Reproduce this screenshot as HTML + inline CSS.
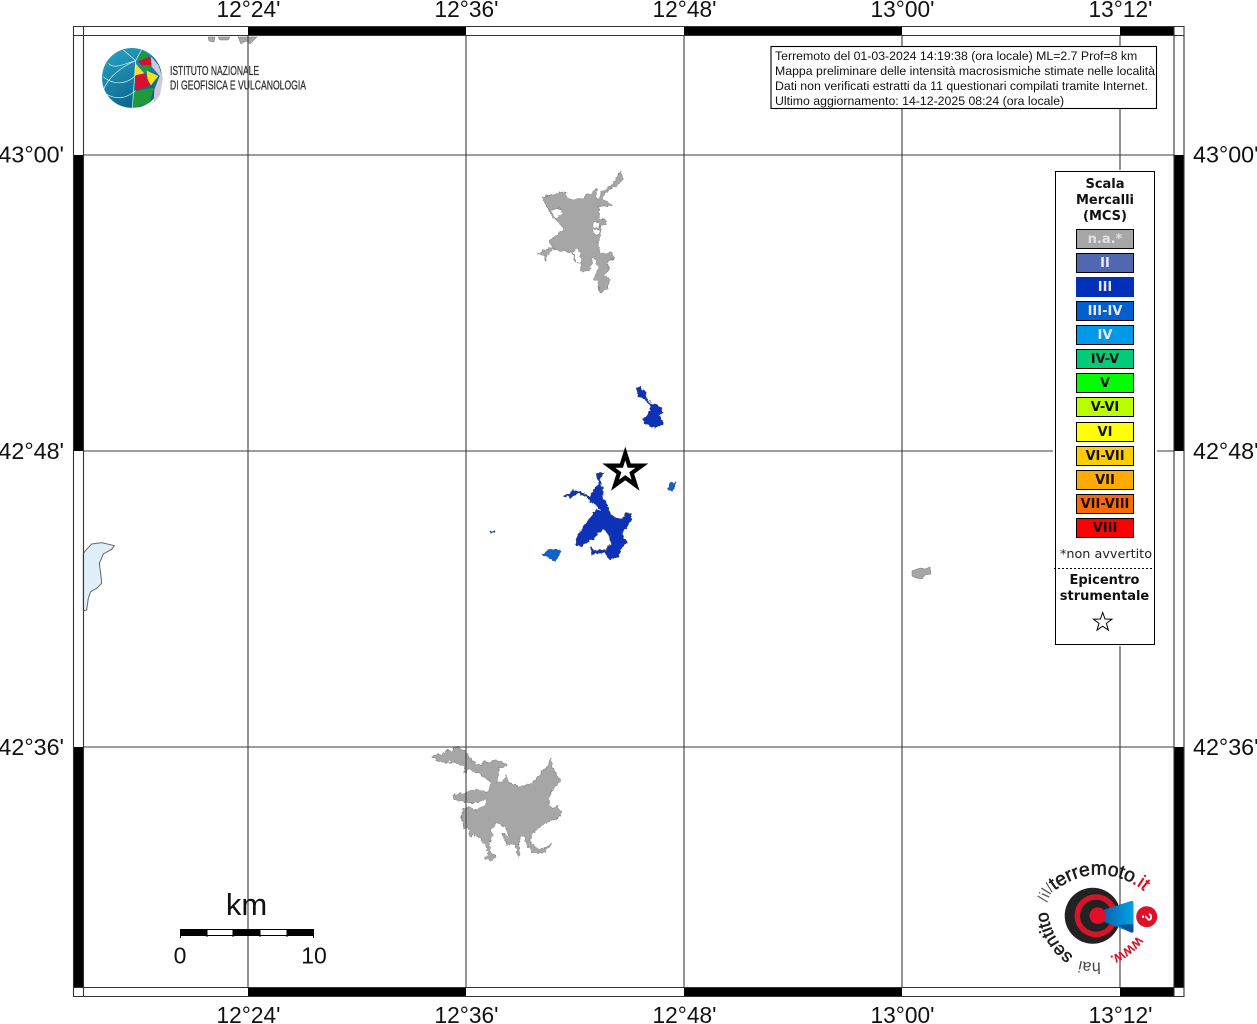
<!DOCTYPE html>
<html><head><meta charset="utf-8"><title>Mappa intensità macrosismiche</title>
<style>
html,body{margin:0;padding:0;background:#fff}
svg{display:block}
.lab{font:22.7px "Liberation Sans",sans-serif;fill:#111}
.lab2{font:23.3px "Liberation Sans",sans-serif;fill:#111}
.leg{font:bold 13px "DejaVu Sans",sans-serif;text-anchor:middle;fill:#111}
.box{font:12.3px "Liberation Sans",sans-serif;fill:#111}
.lg{font-family:"Liberation Sans",sans-serif;fill:#1c1c1c}
</style></head><body>
<svg width="1257" height="1024" viewBox="0 0 1257 1024" xmlns="http://www.w3.org/2000/svg">
<defs>
<linearGradient id="gl" x1="0" y1="0" x2="0.6" y2="1"><stop offset="0" stop-color="#28a8c8"/><stop offset="1" stop-color="#0a5f88"/></linearGradient>
<linearGradient id="cone" x1="0" y1="0" x2="1" y2="0"><stop offset="0" stop-color="#0a5fae"/><stop offset="1" stop-color="#00a4e4"/></linearGradient>
<filter id="jag" x="-10%" y="-10%" width="120%" height="120%"><feTurbulence type="fractalNoise" baseFrequency="0.09" numOctaves="2" seed="4" result="n"/><feDisplacementMap in="SourceGraphic" in2="n" scale="14" xChannelSelector="R" yChannelSelector="G"/></filter>
<path id="p1" d="M352 258Q315 305 262 322L248 327"/>
<path id="p2" d="M242 337Q210 340 178 332L160 326"/>
<path id="p3" d="M160 318Q88 268 82 170L82 150"/>
<path id="p4" d="M82 158Q88 133 102 120L114 110"/>
<path id="p5" d="M104 122Q210 42 328 95L340 102"/>
<path id="p6" d="M335 100Q362 110 388 140L400 155"/>
</defs>
<rect width="1257" height="1024" fill="#fff"/>

<!-- lake -->
<g transform="translate(60 530) scale(.33333)"><path d="M70 70L80 58 95 42 125 38 163 47 155 58 130 72 118 100 122 130 125 160 110 175 92 185 85 205 80 240 70 242Z" fill="#e0f0fb" stroke="#666" stroke-width="3"/></g>

<!-- gray cities -->
<g fill="#a6a6a6" stroke="#777" stroke-width="1.5" transform="translate(530 165) scale(.33333)" filter="url(#jag)">
<path fill-rule="evenodd" d="M35 97L70 88 105 78 112 98 130 105 145 102 160 103 165 90 185 85 197 70 200 78 197 100 207 100 215 80 235 65 250 60 265 30 272 17 280 42 262 62 240 72 225 85 215 100 247 118 245 123 207 125 208 163 228 165 230 178 210 182 215 205 205 225 208 260 228 265 243 262 255 280 232 290 235 315 225 330 240 345 232 372 210 383 205 350 190 345 205 310 195 285 190 275 178 318 152 318 152 270 142 250 130 262 138 290 148 292 135 290 125 258 105 262 85 258 70 250 55 270 45 290 42 272 22 268 40 255 68 245 58 228 85 205 100 190 85 170 70 160ZM60 135L85 130 100 145 85 150 78 160ZM190 170L210 178 205 190 190 185ZM190 190L212 197 205 212 192 205Z"/>
</g>
<g fill="#a6a6a6" stroke="#777" stroke-width="1.5" transform="translate(425 740) scale(.33333)" filter="url(#jag)">
<path d="M22 50L40 42 50 45 62 30 80 35 88 20 105 20 110 30 125 35 130 50 155 72 172 75 175 62 190 68 200 62 215 60 245 72 245 80 222 85 215 130 232 125 245 105 252 130 290 140 320 130 345 105 350 90 365 85 378 55 385 85 395 105 408 125 395 135 378 155 370 195 385 205 398 198 408 215 405 230 380 240 360 250 340 265 318 285 318 310 345 330 380 310 360 335 340 340 320 335 305 315 295 285 280 300 285 345 280 355 270 315 245 315 230 280 255 290 240 260 215 250 195 270 205 285 195 305 195 330 215 350 195 365 180 355 190 345 185 320 165 295 150 285 135 290 130 265 115 265 110 230 115 205 135 200 155 210 185 190 185 180 140 190 115 185 85 180 85 165 110 160 150 150 195 155 195 125 160 100 130 85 120 100 112 75 85 65 60 68 35 62Z"/>
</g>
<g fill="#a6a6a6" stroke="#777" stroke-width=".5">
<path d="M912 571L920 568 925 569 930 567 931 574 925 575 922 579 916 578 912 576Z"/>
<path d="M208 37H215L214 42 209 41ZM218 37H230L228 40 220 40ZM238 37H257L254 40 250 44 246 41 241 44Z"/>
</g>

<!-- blue areas -->
<g transform="translate(480 380) scale(.33333)" stroke="#33415f" stroke-width="1.5" fill="#0833b8" filter="url(#jag)">
<path d="M468 25L480 20 497 40 500 55 512 70 540 78 550 100 535 105 548 125 548 135 520 142 495 130 487 118 505 105 512 78 495 58 475 50Z"/>
<path d="M350 278L372 280 358 300 367 322 370 355 385 375 385 390 405 415 430 420 435 400 452 398 455 420 440 440 425 460 440 490 420 510 415 530 390 540 375 520 345 520 335 525 332 500 345 512 380 510 392 490 387 462 372 448 355 458 340 478 305 497 290 497 288 475 310 440 330 415 345 392 362 390 345 370 330 368 322 350 295 340 275 352 250 348 270 340 275 330 300 335 330 350 345 325 358 315 350 290Z"/>
<path d="M28 455L45 452 45 457 30 458Z"/>
<path fill="#0b62d0" d="M187 525L210 505 242 512 228 545 205 532Z"/>
<path fill="#0b62d0" d="M567 315L585 305 585 320 575 335 567 330Z"/>
</g>

<!-- logo INGV -->
<g>
<circle cx="132" cy="78" r="30" fill="url(#gl)"/>
<g transform="translate(95 40) scale(.33333)">
<path d="M125 62L140 30 165 50Z" fill="#1f9a3a"/>
<path d="M128 64L165 50 170 76 140 75Z" fill="#d8102f"/>
<path d="M138 78L170 76 160 95 148 98Z" fill="#1f9a3a"/>
<path d="M120 68L148 100 120 106Z" fill="#f3e21b"/>
<path d="M155 92L190 108 168 136 158 120Z" fill="#f3e21b"/>
<path d="M120 106L150 100 166 136 122 152Z" fill="#d8102f"/>
<path d="M113 155L176 143 165 188 113 205Z" fill="#1f9a3a"/>
<path d="M168 50L190 75 204 115 195 165 176 190 178 148 194 108 170 80Z" fill="#d0c8d8"/>
<g fill="none" stroke="#dff1f6" stroke-width="2">
<path d="M122 62L112 205M122 62C80 80 40 110 25 150M122 62L85 30M122 62L140 28"/>
<path d="M40 70C60 90 90 70 122 62M24 110C60 140 100 130 122 105M30 160C70 185 100 170 122 152M60 190C90 210 140 210 176 185"/>
</g>
</g>
<text x="170" y="75" font-family="'Liberation Sans Narrow','Liberation Sans',sans-serif" font-size="13" fill="#333" stroke="#333" stroke-width=".3" textLength="89" lengthAdjust="spacingAndGlyphs">ISTITUTO NAZIONALE</text>
<text x="170" y="89.5" font-family="'Liberation Sans Narrow','Liberation Sans',sans-serif" font-size="13" fill="#333" stroke="#333" stroke-width=".3" textLength="136" lengthAdjust="spacingAndGlyphs">DI GEOFISICA E VULCANOLOGIA</text>
</g>

<!-- grid -->
<g stroke="#3c3c3c" stroke-width="1.1" fill="none">
<path d="M248 36V987M466 36V987M684 36V987M902 36V987M1120 36V987M84 155H1174M84 451H1174M84 747H1174"/>
</g>

<!-- frame -->
<g fill="#000">
<rect x="248" y="26" width="218" height="10"/><rect x="684" y="26" width="218" height="10"/><rect x="1120" y="26" width="54" height="10"/>
<rect x="248" y="987" width="218" height="10"/><rect x="684" y="987" width="218" height="10"/><rect x="1120" y="987" width="54" height="10"/>
<rect x="74" y="155" width="10" height="296"/><rect x="74" y="747" width="10" height="240"/>
<rect x="1174" y="155" width="10" height="296"/><rect x="1174" y="747" width="10" height="240"/>
</g>
<path d="M73.5 26.5H1184V996.5H73.5ZM83.5 26.5V996.5M1174 26.5V996.5M73.5 35.5H1184M73.5 987.5H1184" fill="none" stroke="#333" stroke-width="1.1"/>

<!-- labels -->
<g text-anchor="middle">
<text class="lab" x="248.5" y="17">12°24'</text><text class="lab" x="466.5" y="17">12°36'</text><text class="lab" x="684.5" y="17">12°48'</text><text class="lab" x="902.5" y="17">13°00'</text><text class="lab" x="1120.5" y="17">13°12'</text>
<text class="lab" x="248.5" y="1023">12°24'</text><text class="lab" x="466.5" y="1023">12°36'</text><text class="lab" x="684.5" y="1023">12°48'</text><text class="lab" x="902.5" y="1023">13°00'</text><text class="lab" x="1120.5" y="1023">13°12'</text>
</g>
<g text-anchor="end">
<text class="lab2" x="64" y="162.5">43°00'</text><text class="lab2" x="64" y="459">42°48'</text><text class="lab2" x="64" y="755">42°36'</text>
</g>
<text class="lab2" x="1193" y="162.5">43°00'</text><text class="lab2" x="1193" y="459">42°48'</text><text class="lab2" x="1193" y="755">42°36'</text>

<!-- star -->
<path d="M625.3 453.5L629.2 465.6 641.9 465.6 631.7 473.1 635.6 485.2 625.3 477.7 615 485.2 618.9 473.1 608.7 465.6 621.4 465.6Z" fill="#fff" stroke="#000" stroke-width="4.2" stroke-miterlimit="10"/>

<!-- info box -->
<rect x="771" y="46.5" width="385.5" height="62" fill="#fff" stroke="#000" stroke-width="1.1"/>
<text class="box" x="775" y="60">Terremoto del 01-03-2024 14:19:38 (ora locale) ML=2.7 Prof=8 km</text>
<text class="box" x="775" y="75">Mappa preliminare delle intensità macrosismiche stimate nelle località</text>
<text class="box" x="775" y="90">Dati non verificati estratti da 11 questionari compilati tramite Internet.</text>
<text class="box" x="775" y="105">Ultimo aggiornamento: 14-12-2025 08:24 (ora locale)</text>

<!-- legend -->
<rect x="1053" y="170" width="104" height="476" fill="#fff"/>
<rect x="1055.5" y="171.5" width="99" height="473" fill="#fff" stroke="#000" stroke-width="1"/>
<text class="leg" x="1105" y="188">Scala</text><text class="leg" x="1105" y="204">Mercalli</text><text class="leg" x="1105" y="220">(MCS)</text>
<g stroke="#000" stroke-width="1">
<rect x="1076.5" y="229.5" width="57" height="19" fill="#a6a6a6"/>
<rect x="1076.5" y="253.5" width="57" height="19" fill="#5068b0"/>
<rect x="1076" y="277" width="58" height="20" fill="#0030b8" stroke="none"/>
<rect x="1076.5" y="301.5" width="57" height="19" fill="#0060d0"/>
<rect x="1076.5" y="325.5" width="57" height="19" fill="#0098e8"/>
<rect x="1076.5" y="349.5" width="57" height="19" fill="#00cc78"/>
<rect x="1076.5" y="373.5" width="57" height="19" fill="#00ff00"/>
<rect x="1076.5" y="397.5" width="57" height="19" fill="#b8ff00"/>
<rect x="1076.5" y="422.5" width="57" height="19" fill="#ffff00"/>
<rect x="1076.5" y="446.5" width="57" height="19" fill="#ffcc00"/>
<rect x="1076.5" y="470.5" width="57" height="19" fill="#ffaa00"/>
<rect x="1076.5" y="494.5" width="57" height="19" fill="#ff6a00"/>
<rect x="1076.5" y="518.5" width="57" height="19" fill="#ff0000"/>
</g>
<g>
<text class="leg" x="1105" y="243" style="fill:#e2e2e2">n.a.*</text>
<text class="leg" x="1105" y="267" style="fill:#e8e8f0">II</text>
<text class="leg" x="1105" y="291" style="fill:#e8e8f0">III</text>
<text class="leg" x="1105" y="315" style="fill:#e8e8f0">III-IV</text>
<text class="leg" x="1105" y="339" style="fill:#e8e8f0">IV</text>
<text class="leg" x="1105" y="363">IV-V</text>
<text class="leg" x="1105" y="387">V</text>
<text class="leg" x="1105" y="411">V-VI</text>
<text class="leg" x="1105" y="436">VI</text>
<text class="leg" x="1105" y="460">VI-VII</text>
<text class="leg" x="1105" y="484">VII</text>
<text class="leg" x="1105" y="508">VII-VIII</text>
<text class="leg" x="1105" y="532">VIII</text>
</g>
<text x="1106" y="558" text-anchor="middle" font-family="'DejaVu Sans',sans-serif" font-size="12.8" fill="#222">*non avvertito</text>
<path d="M1054 568.5H1153" stroke="#000" stroke-dasharray="2 2" fill="none"/>
<text class="leg" x="1104.5" y="584">Epicentro</text><text class="leg" x="1104.5" y="600">strumentale</text>
<path d="M1102.7 612.5L1105 619 1112 619.2 1106.4 623.4 1108.4 630.2 1102.7 626.2 1097 630.2 1099 623.4 1093.4 619.2 1100.4 619Z" fill="#fff" stroke="#000" stroke-width="1"/>

<!-- scale bar -->
<g>
<rect x="180.5" y="929.5" width="133" height="6" fill="#fff" stroke="#000"/>
<rect x="180" y="929" width="27" height="7" fill="#000"/><rect x="233" y="929" width="27" height="7" fill="#000"/><rect x="287" y="929" width="27" height="7" fill="#000"/>
<path d="M180.5 929V938M207 929V937M233 929V937M260 929V937M287 929V937M313.5 929V938" stroke="#000" fill="none"/>
<text x="246.5" y="915" text-anchor="middle" font-family="'Liberation Sans',sans-serif" font-size="31" fill="#111">km</text>
<text x="180" y="963.5" text-anchor="middle" font-family="'Liberation Sans',sans-serif" font-size="23" fill="#111">0</text>
<text x="314" y="963.5" text-anchor="middle" font-family="'Liberation Sans',sans-serif" font-size="23" fill="#111">10</text>
</g>

<!-- haisentito logo -->
<g>
<circle cx="1092.7" cy="915.7" r="28" fill="#222"/>
<circle cx="1096" cy="915.7" r="18.7" fill="none" stroke="#d8142a" stroke-width="5.5"/>
<path d="M1103 910L1131 901Q1133.5 900.5 1133.5 903V930Q1133.5 933 1131 932.5L1102 921Z" fill="url(#cone)"/>
<path d="M1118 925L1133.5 924V931Q1133.5 933 1131 932.5Z" fill="#0a4f94"/>
<circle cx="1097.7" cy="915.7" r="8.3" fill="#e0102a"/>
<circle cx="1146.7" cy="916.7" r="10.5" fill="#e0102a"/>
<text transform="translate(1142 917) rotate(90)" text-anchor="middle" font-family="'Liberation Sans',sans-serif" font-weight="bold" font-size="15" fill="#fff">?</text>
<g transform="translate(1020 850) scale(.33333)">
<text class="lg" font-size="44" stroke="#d8142a" stroke-width="1.5" style="fill:#d8142a"><textPath href="#p1">www.</textPath></text>
<text class="lg" font-size="48" style="fill:#444"><textPath href="#p2">hai</textPath></text>
<text class="lg" font-size="54" stroke="#1c1c1c" stroke-width="1.5"><textPath href="#p3">sentito</textPath></text>
<text class="lg" font-size="46" style="fill:#555"><textPath href="#p4">/il/</textPath></text>
<text class="lg" font-size="58" stroke="#1c1c1c" stroke-width="1.5"><textPath href="#p5">terremoto</textPath></text>
<text class="lg" font-size="56" stroke="#d8142a" stroke-width="1.5" style="fill:#d8142a"><textPath href="#p6">.it</textPath></text>
</g>
</g>
</svg>
</body></html>
